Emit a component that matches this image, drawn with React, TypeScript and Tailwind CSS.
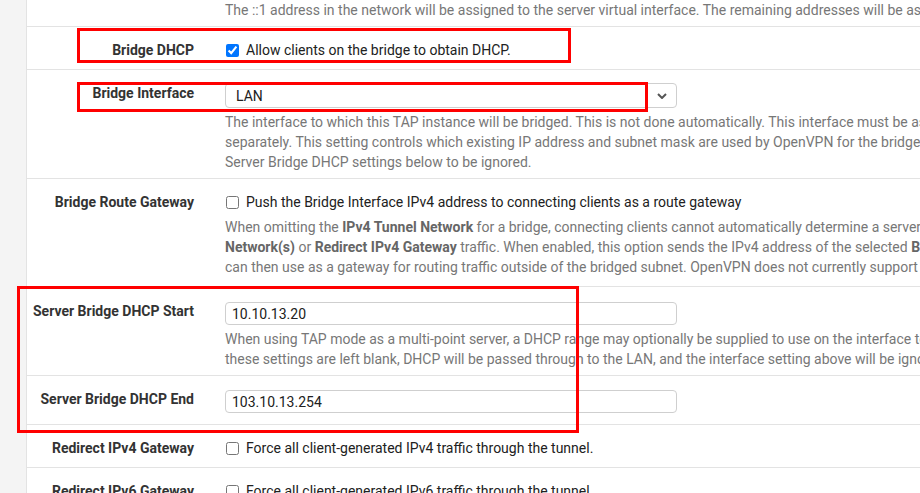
import React from "react";

const FONT = { fontFamily: "Roboto, 'Liberation Sans', sans-serif" };

function Row({
  label,
  labelPt,
  pt,
  pb,
  children,
}: {
  label?: string;
  labelPt: string;
  pt: string;
  pb: string;
  children: React.ReactNode;
}) {
  return (
    <div className={`flex border-b border-[#e3e3e3] ${pt} ${pb}`}>
      <div className="w-[183px] shrink-0 pr-[16px] text-right">
        {label && (
          <div className={`font-bold text-[#333] whitespace-nowrap ${labelPt}`}>{label}</div>
        )}
      </div>
      <div className="flex-1 min-w-0 pl-[15px] whitespace-nowrap">{children}</div>
    </div>
  );
}

function Check({ checked, text }: { checked?: boolean; text: string }) {
  return (
    <div className="flex items-center h-[20px] text-[#212121]">
      <input
        type="checkbox"
        defaultChecked={checked}
        className="w-[13px] h-[13px] ml-[1px] mr-[7px] m-0 shrink-0"
      />
      <span>{text}</span>
    </div>
  );
}

function Help({ children }: { children: React.ReactNode }) {
  return <div className="text-[#777] h-[20px]">{children}</div>;
}

function B({ children }: { children: React.ReactNode }) {
  return <span className="font-bold text-[#666]">{children}</span>;
}

function TextInput({ value }: { value: string }) {
  return (
    <div className="w-[452px] h-[23px] border border-[#cfcfcf] rounded-[4px] flex items-center pl-[6px] text-[#212121]">
      {value}
    </div>
  );
}

export default function App() {
  return (
    <div
      className="relative w-[920px] h-[493px] overflow-hidden bg-white flex text-[14px] leading-[20px]"
      style={FONT}
    >
      <div className="w-[27px] shrink-0 bg-[#f4f4f4] border-r border-[#e3e3e3]" />
      <div className="flex-1 min-w-0 flex flex-col">
        {/* top partial row */}
        <Row labelPt="" pt="pt-0" pb="pb-[6px]">
          <Help>
            The ::1 address in the network will be assigned to the server virtual interface. The remaining addresses will be assigned to connecting clients.
          </Help>
        </Row>

        <Row label="Bridge DHCP" labelPt="pt-0" pt="pt-[13px]" pb="pb-[9px]">
          <Check checked text="Allow clients on the bridge to obtain DHCP." />
        </Row>

        <Row label="Bridge Interface" labelPt="pt-0" pt="pt-[13px]" pb="pb-[6px]">
          <div className="w-[452px] h-[25px] border border-[#cfcfcf] rounded-[4px] flex items-center justify-between pl-[10px] pr-[9px] text-[#212121]">
            <span className="pt-[1px]">LAN</span>
            <svg width="10" height="6" viewBox="0 0 10 6">
              <path d="M1 1 L5 5 L9 1" stroke="#555" strokeWidth="2" fill="none" />
            </svg>
          </div>
          <div className="mt-[4px]">
            <Help>
              The interface to which this TAP instance will be bridged. This is not done automatically. This interface must be assigned and the bridge created
            </Help>
            <Help>
              separately. This setting controls which existing IP address and subnet mask are used by OpenVPN for the bridge. Setting this to "none" will cause the
            </Help>
            <Help>Server Bridge DHCP settings below to be ignored.</Help>
          </div>
        </Row>

        <Row label="Bridge Route Gateway" labelPt="pt-0" pt="pt-[13px]" pb="pb-[9px]">
          <Check text="Push the Bridge Interface IPv4 address to connecting clients as a route gateway" />
          <div className="mt-[5px]">
            <Help>
              When omitting the <B>IPv4 Tunnel Network</B> for a bridge, connecting clients cannot automatically determine a server address to use for
            </Help>
            <Help>
              <B>Network(s)</B> or <B>Redirect IPv4 Gateway</B> traffic. When enabled, this option sends the IPv4 address of the selected <B>Bridge Interface</B> to clients which they
            </Help>
            <Help>
              can then use as a gateway for routing traffic outside of the bridged subnet. OpenVPN does not currently support this automatically for IPv6.
            </Help>
          </div>
        </Row>

        <Row label="Server Bridge DHCP Start" labelPt="pt-[0px] -mt-[1px]" pt="pt-[15px]" pb="pb-[6px]">
          <TextInput value="10.10.13.20" />
          <div className="mt-[4px]">
            <Help>
              When using TAP mode as a multi-point server, a DHCP range may optionally be supplied to use on the interface to which this TAP instance is bridged. If
            </Help>
            <Help>
              these settings are left blank, DHCP will be passed through to the LAN, and the interface setting above will be ignored.
            </Help>
          </div>
        </Row>

        <Row label="Server Bridge DHCP End" labelPt="-mt-[1px]" pt="pt-[14px]" pb="pb-[11px]">
          <TextInput value="103.10.13.254" />
        </Row>

        <Row label="Redirect IPv4 Gateway" labelPt="pt-0" pt="pt-[13px]" pb="pb-[9px]">
          <Check text="Force all client-generated IPv4 traffic through the tunnel." />
        </Row>

        <Row label="Redirect IPv6 Gateway" labelPt="pt-0" pt="pt-[13px]" pb="pb-[9px]">
          <Check text="Force all client-generated IPv6 traffic through the tunnel." />
        </Row>
      </div>

      {/* red annotation boxes */}
      <div className="absolute left-[77px] top-[28px] w-[494px] h-[35px] border-[3px] border-[#ff0000] pointer-events-none" />
      <div className="absolute left-[77px] top-[82px] w-[571px] h-[30px] border-[3px] border-[#ff0000] pointer-events-none" />
      <div className="absolute left-[17px] top-[286px] w-[562px] h-[147px] border-[3px] border-[#ff0000] pointer-events-none" />
    </div>
  );
}
